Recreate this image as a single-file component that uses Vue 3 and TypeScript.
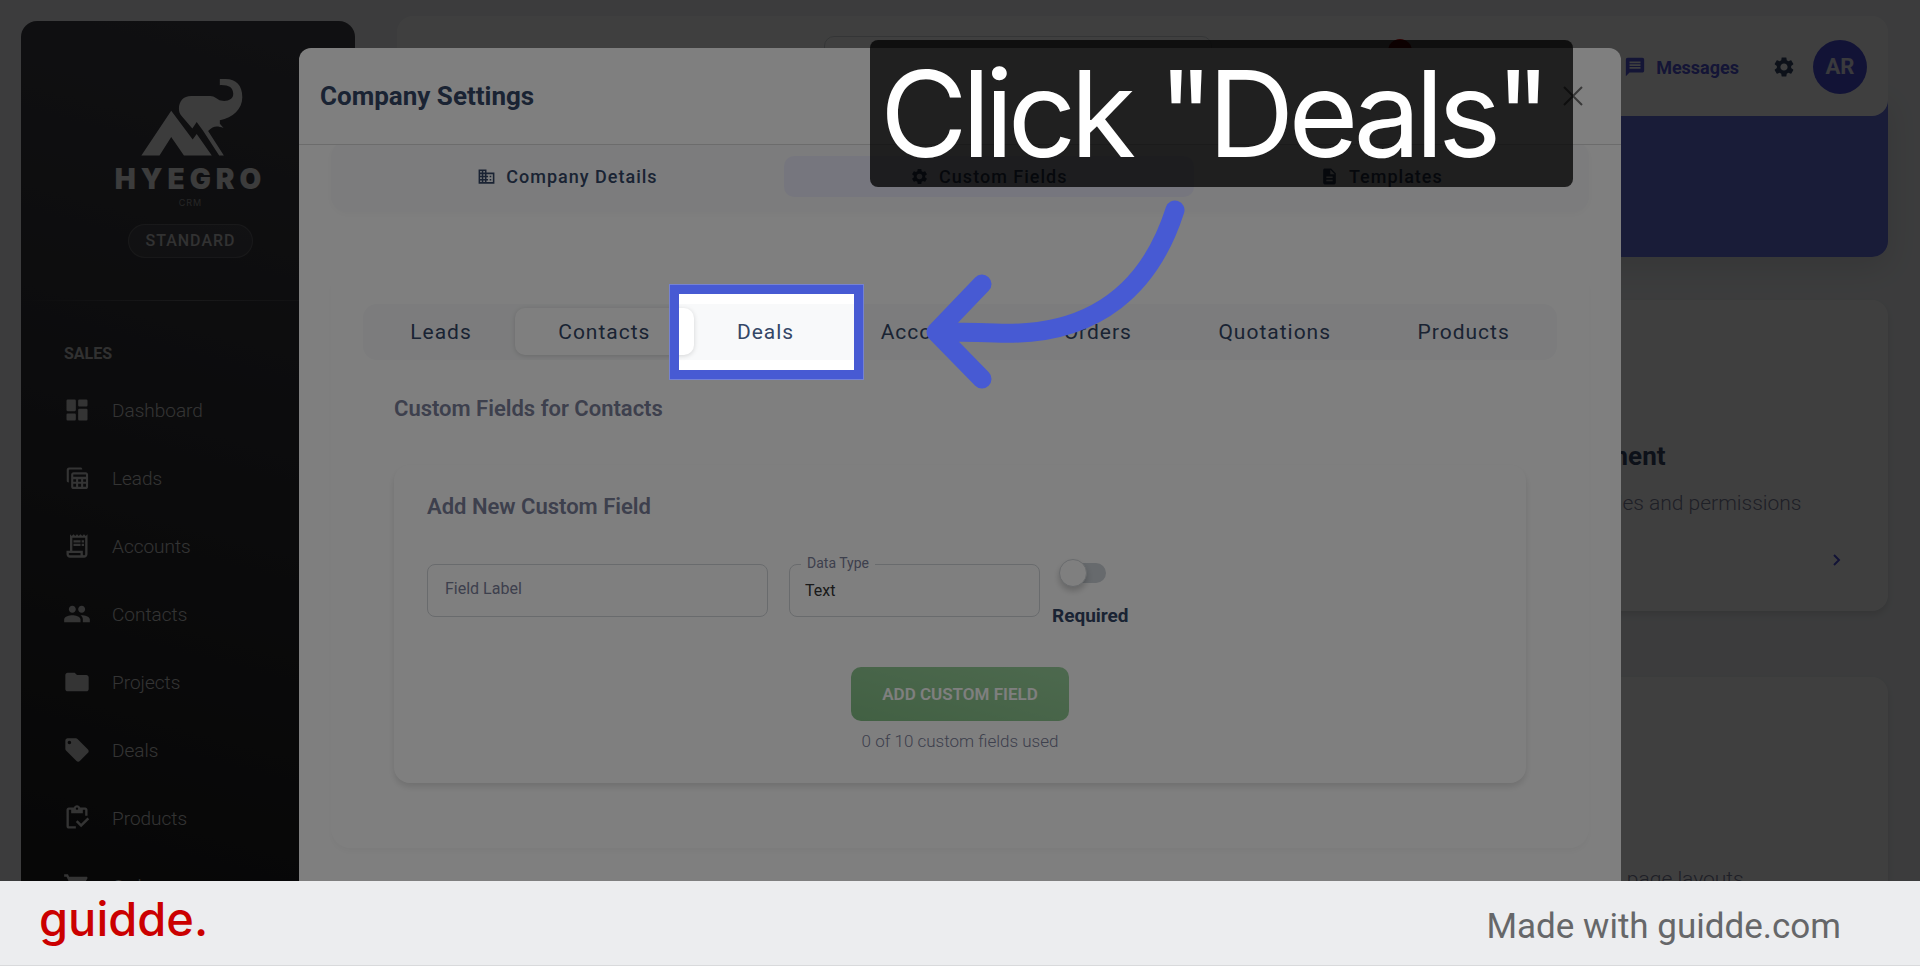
<script setup lang="ts">
import { ref } from 'vue'

interface NavItem {
  label: string
  icon: string
}

const icons: Record<string, string> = {
  dashboard:
    'M4 13h6a1 1 0 0 0 1-1V4a1 1 0 0 0-1-1H4a1 1 0 0 0-1 1v8a1 1 0 0 0 1 1zm0 8h6a1 1 0 0 0 1-1v-4a1 1 0 0 0-1-1H4a1 1 0 0 0-1 1v4a1 1 0 0 0 1 1zm10 0h6a1 1 0 0 0 1-1v-8a1 1 0 0 0-1-1h-6a1 1 0 0 0-1 1v8a1 1 0 0 0 1 1zM13 4v4a1 1 0 0 0 1 1h6a1 1 0 0 0 1-1V4a1 1 0 0 0-1-1h-6a1 1 0 0 0-1 1z',
  leads:
    'M5 15.500V5.500C5 5 5.300 4.700 5.800 4.700H16.500V4.500C16.500 3.500 15.800 3 15 3H5.200C4 3 3.200 3.800 3.200 5v9.300c0 .8.700 1.500 1.800 1.500zM19.500 7H9C7.900 7 7 7.900 7 9v10.500C7 20.600 7.900 21.500 9 21.500h10.500c1.100 0 2-.9 2-2V9c0-1.100-.9-2-2-2zm.2 2v2H8.800V9zM8.800 13h2.400v2.200H8.800zm0 4h2.400v2.500H8.800zm4.200 2.500V17h2.500v2.500zm0-4.300V13h2.500v2.200zm4.300 4.300V17h2.400v2.500zm0-4.300V13h2.400v2.200z',
  accounts:
    'M19.500 3.500L18 2l-1.500 1.500L15 2l-1.500 1.500L12 2l-1.500 1.500L9 2 7.500 3.500 6 2v14H3v3c0 1.660 1.340 3 3 3h12c1.660 0 3-1.340 3-3V2l-1.500 1.500zM15 20H6c-.55 0-1-.45-1-1v-1h10v2zm4-1c0 .55-.45 1-1 1s-1-.45-1-1v-3H8V5h11v14zM9 7h6v2H9zM16 7h2v2h-2zM9 10h6v2H9zM16 10h2v2h-2z',
  contacts:
    'M16 11c1.660 0 2.990-1.340 2.990-3S17.660 5 16 5c-1.660 0-3 1.340-3 3s1.340 3 3 3zm-8 0c1.660 0 2.990-1.340 2.990-3S9.660 5 8 5C6.340 5 5 6.340 5 8s1.340 3 3 3zm0 2c-2.330 0-7 1.170-7 3.500V19h14v-2.500c0-2.330-4.670-3.500-7-3.500zm8 0c-.29 0-.62.02-.97.05 1.160.84 1.970 1.970 1.970 3.450V19h6v-2.500c0-2.330-4.670-3.500-7-3.500z',
  projects:
    'M10 4H4c-1.100 0-1.990.9-1.990 2L2 18c0 1.100.9 2 2 2h16c1.100 0 2-.9 2-2V8c0-1.100-.9-2-2-2h-8l-2-2z',
  deals:
    'M21.410 11.580l-9-9C12.050 2.220 11.550 2 11 2H4c-1.100 0-2 .9-2 2v7c0 .55.22 1.050.59 1.420l9 9c.36.36.86.58 1.410.58.55 0 1.050-.22 1.410-.59l7-7c.37-.36.59-.86.59-1.410 0-.55-.23-1.060-.59-1.420zM5.500 7C4.670 7 4 6.330 4 5.500S4.670 4 5.500 4 7 4.670 7 5.500 6.330 7 5.500 7z',
  products:
    'M5 5h2v3h10V5h2v5h2V5c0-1.100-.9-2-2-2h-4.180C14.400 1.840 13.300 1 12 1s-2.400.84-2.820 2H5c-1.100 0-2 .9-2 2v14c0 1.100.9 2 2 2h6v-2H5V5zm7-2c.55 0 1 .45 1 1s-.45 1-1 1-1-.45-1-1 .45-1 1-1zM21 11.500L15.510 17l-3.010-3L11 15.500l4.510 4.500L22.500 13z',
  orders:
    'M7 18c-1.100 0-1.990.9-1.990 2S5.900 22 7 22s2-.9 2-2-.9-2-2-2zM1 2v2h2l3.600 7.590-1.350 2.450c-.16.28-.25.61-.25.96 0 1.100.9 2 2 2h12v-2H7.420c-.14 0-.25-.11-.25-.25l.03-.12.9-1.630h7.450c.75 0 1.410-.41 1.750-1.030l3.580-6.490c.08-.14.12-.31.12-.48 0-.55-.45-1-1-1H5.210l-.94-2H1zm16 16c-1.100 0-1.990.9-1.990 2s.89 2 1.990 2 2-.9 2-2-.9-2-2-2z',
  building:
    'M12 7V3H2v18h20V7H12zM6 19H4v-2h2v2zm0-4H4v-2h2v2zm0-4H4V9h2v2zm0-4H4V5h2v2zm4 12H8v-2h2v2zm0-4H8v-2h2v2zm0-4H8V9h2v2zm0-4H8V5h2v2zm10 12h-8v-2h2v-2h-2v-2h2v-2h-2V9h8v10zm-2-8h-2v2h2v-2zm0 4h-2v2h2v-2z',
  gear:
    'M19.140 12.940c.04-.3.06-.61.06-.94 0-.32-.02-.64-.07-.94l2.030-1.580c.18-.14.23-.41.12-.61l-1.920-3.320c-.12-.22-.37-.29-.59-.22l-2.390.96c-.5-.38-1.030-.7-1.620-.94l-.36-2.540c-.04-.24-.24-.41-.48-.41h-3.840c-.24 0-.43.17-.47.41l-.36 2.540c-.59.24-1.130.57-1.620.94l-2.390-.96c-.22-.08-.47 0-.59.22L2.740 8.870c-.12.21-.08.47.12.61l2.030 1.580c-.05.3-.09.63-.09.94s.02.64.07.94l-2.030 1.580c-.18.14-.23.41-.12.61l1.920 3.320c.12.22.37.29.59.22l2.390-.96c.5.38 1.030.7 1.620.94l.36 2.540c.05.24.24.41.48.41h3.840c.24 0 .44-.17.47-.41l.36-2.540c.59-.24 1.130-.56 1.620-.94l2.390.96c.22.08.47 0 .59-.22l1.920-3.320c.12-.22.07-.47-.12-.61l-2.010-1.580zM12 15.600c-1.980 0-3.600-1.620-3.600-3.600s1.620-3.600 3.600-3.600 3.600 1.620 3.600 3.600-1.620 3.600-3.600 3.600z',
  document:
    'M14 2H6c-1.100 0-1.990.9-1.990 2L4 20c0 1.100.89 2 1.990 2H18c1.100 0 2-.9 2-2V8l-6-6zm2 16H8v-2h8v2zm0-4H8v-2h8v2zm-3-5V3.500L18.500 9H13z',
  message:
    'M20 2H4c-1.100 0-1.990.9-1.990 2L2 22l4-4h14c1.100 0 2-.9 2-2V4c0-1.100-.9-2-2-2zm-2 12H6v-2h12v2zm0-3H6V9h12v2zm0-3H6V6h12v2z',
}

const navItems: NavItem[] = [
  { label: 'Dashboard', icon: 'dashboard' },
  { label: 'Leads', icon: 'leads' },
  { label: 'Accounts', icon: 'accounts' },
  { label: 'Contacts', icon: 'contacts' },
  { label: 'Projects', icon: 'projects' },
  { label: 'Deals', icon: 'deals' },
  { label: 'Products', icon: 'products' },
  { label: 'Orders', icon: 'orders' },
]

const sections: NavItem[] = [
  { label: 'Company Details', icon: 'building' },
  { label: 'Custom Fields', icon: 'gear' },
  { label: 'Templates', icon: 'document' },
]
const activeSection = ref('Custom Fields')

const entities = ['Leads', 'Contacts', 'Deals', 'Accounts', 'Orders', 'Quotations', 'Products']
const activeEntity = ref('Contacts')

const fieldLabel = ref('')
const dataType = ref('Text')
const required = ref(false)
</script>

<template>
  <div class="guide">
    <div class="stage">
      <div class="app">
        <aside class="sidebar">
          <div class="brand">
            <svg class="brand-mark" viewBox="401 232 340 238" aria-hidden="true">
              <path d="M512 332 576 418 588 402 633 466H550L512 411 477 466H423Z" />
              <path
                d="M535 326C535 304 548 288 572 288H628C642 288 650 299 660 302C680 306 698 298 697 281C696 263 684 255 657 256V238H674C706 238 724 258 724 292C724 328 696 352 657 361V371L668 384C650 378 638 376 622 393L669 466H655L607 392 588 366 575 385 543 348C537 341 535 335 535 326Z"
              />
            </svg>
            <span class="brand-name">HYEGRO</span>
            <span class="brand-sub">CRM</span>
            <span class="plan">STANDARD</span>
          </div>
          <hr class="rule" />
          <h2 class="nav-title">SALES</h2>
          <nav class="nav">
            <a v-for="item in navItems" :key="item.label" href="#" class="nav-link">
              <svg viewBox="0 0 24 24" aria-hidden="true"><path :d="icons[item.icon]" fill-rule="evenodd" /></svg>
              <span>{{ item.label }}</span>
            </a>
          </nav>
        </aside>

        <main class="main">
          <header class="topbar">
            <input class="search" type="search" aria-label="Search" />
            <div class="topbar-actions">
              <button class="alerts" type="button" aria-label="Notifications"><i class="dot"></i></button>
              <a href="#" class="messages">
                <svg viewBox="0 0 24 24" aria-hidden="true"><path :d="icons.message" /></svg>
                <span>Messages</span>
              </a>
              <button class="settings" type="button" aria-label="Settings">
                <svg viewBox="0 0 24 24" aria-hidden="true"><path :d="icons.gear" /></svg>
              </button>
              <span class="avatar">AR</span>
            </div>
          </header>
          <div class="banner"></div>
          <section class="tile">
            <h3>User Management</h3>
            <p>Manage user profiles and permissions</p>
            <svg class="chevron" viewBox="0 0 10 14" aria-hidden="true"><path d="M2 2 7 7 2 12" /></svg>
          </section>
          <section class="tile tile-second">
            <p>Customize fields &amp; page layouts</p>
          </section>
        </main>
      </div>

      <div class="backdrop">
        <div class="modal" role="dialog" aria-labelledby="modal-title">
          <header class="modal-head">
            <h1 id="modal-title">Company Settings</h1>
            <button class="close" type="button" aria-label="Close">
              <svg viewBox="0 0 20 20" aria-hidden="true"><path d="M1 1 19 19M19 1 1 19" /></svg>
            </button>
          </header>
          <div class="modal-body">
            <div class="sections" role="tablist">
              <button
                v-for="s in sections"
                :key="s.label"
                type="button"
                role="tab"
                class="section-tab"
                :class="{ active: s.label === activeSection }"
                @click="activeSection = s.label"
              >
                <svg viewBox="0 0 24 24" aria-hidden="true"><path :d="icons[s.icon]" /></svg>
                <span>{{ s.label }}</span>
              </button>
            </div>

            <section class="panel">
              <div class="entities" role="tablist">
                <button
                  v-for="e in entities"
                  :key="e"
                  type="button"
                  role="tab"
                  class="entity-tab"
                  :class="{ active: e === activeEntity }"
                  @click="activeEntity = e"
                >
                  {{ e }}
                </button>
              </div>
              <div class="fields">
                <h2>Custom Fields for {{ activeEntity }}</h2>
                <form class="card" @submit.prevent>
                  <h3>Add New Custom Field</h3>
                  <div class="row">
                    <input v-model="fieldLabel" class="box text-box" placeholder="Field Label" aria-label="Field Label" />
                    <div class="select-wrap">
                      <label for="data-type">Data Type</label>
                      <select id="data-type" v-model="dataType" class="box select-box">
                        <option>Text</option>
                        <option>Number</option>
                        <option>Date</option>
                      </select>
                    </div>
                    <label class="toggle">
                      <input v-model="required" type="checkbox" />
                      <span>Required</span>
                    </label>
                  </div>
                  <button class="add" type="submit" disabled>ADD CUSTOM FIELD</button>
                  <p class="usage">0 of 10 custom fields used</p>
                </form>
              </div>
            </section>
          </div>
        </div>
      </div>

      <div class="spotlight"></div>
      <div class="callout">Click "Deals"</div>
      <svg class="arrow" viewBox="0 0 270 200" aria-hidden="true">
        <path d="M255 20C232 92 180 148 75 143Q40 142 16 142M62 94 16 142 62 189" />
      </svg>
    </div>

    <footer class="credit">
      <span class="logo">guidde.</span>
      <span class="made">Made with guidde.com</span>
    </footer>
  </div>
</template>

<style>
body {
  margin: 0;
}
</style>

<style scoped>
* {
  box-sizing: border-box;
}
h1,
h2,
h3,
p {
  margin: 0;
}
button,
input,
select {
  font: inherit;
  color: inherit;
  border: 0;
  background: none;
  padding: 0;
  margin: 0;
}
a {
  color: inherit;
  text-decoration: none;
}
svg {
  display: block;
  flex: none;
  fill: currentColor;
}
.guide {
  height: 100vh;
  display: flex;
  flex-direction: column;
  font-family: Roboto, 'Liberation Sans', sans-serif;
}
.stage {
  position: relative;
  flex: 1;
  min-height: 0;
  overflow: hidden;
}
.app {
  isolation: isolate;
  height: 100%;
  display: flex;
  gap: 42px;
  padding: 16px 32px 0 21px;
  background: #f0f2f5;
}

/* Sidebar */
.sidebar {
  flex: none;
  width: 334px;
  height: 940px;
  margin-top: 5px;
  border-radius: 16px;
  background: linear-gradient(195deg, #42424a, #191919);
  color: #fff;
}
.brand {
  display: flex;
  flex-direction: column;
  align-items: center;
  padding: 56px 0 0 5px;
}
.brand-mark {
  width: 114px;
  height: 80px;
}
.brand-name {
  margin-top: 6px;
  font: 900 28px/32px Inter, sans-serif;
  letter-spacing: 5px;
}
.brand-mark,
.brand-name {
  color: #f2f2f2;
}
.brand-sub {
  margin-top: 2px;
  font: 400 9px/12px Inter, sans-serif;
  letter-spacing: 1px;
  color: #999;
}
.plan {
  height: 34px;
  margin-top: 15px;
  padding: 0 16px;
  border: 1px solid rgba(255, 255, 255, 0.16);
  border-radius: 17px;
  background: rgba(255, 255, 255, 0.08);
  font-size: 16px;
  font-weight: 500;
  line-height: 32px;
  letter-spacing: 1px;
  color: #c8c8c8;
}
.rule {
  height: 1px;
  margin: 42px 0 0;
  border: 0;
  background: linear-gradient(90deg, transparent, rgba(255, 255, 255, 0.25), transparent);
}
.nav-title {
  margin: 41px 0 0 43px;
  font-size: 16px;
  line-height: 24px;
  font-weight: 700;
  color: #c4c4c4;
}
.nav {
  margin-top: 10px;
}
.nav-link {
  display: flex;
  align-items: center;
  gap: 21px;
  height: 68px;
  padding-left: 42px;
  font-size: 19px;
  font-weight: 300;
  color: #d0d0d0;
}
.nav-link svg {
  width: 28px;
  height: 28px;
}

/* Page behind the dialog */
.main {
  flex: 1;
  min-width: 0;
}
.topbar {
  position: relative;
  z-index: 1;
  display: flex;
  justify-content: space-between;
  height: 100px;
  padding: 20px 21px 0 427px;
  border-radius: 16px;
  background: #fff;
}
.search {
  width: 388px;
  height: 50px;
  border: 1px solid #d2d6da;
  border-radius: 10px;
}
.topbar-actions {
  display: flex;
  align-items: center;
  height: 62px;
  color: #5054d8;
}
.alerts {
  position: relative;
  width: 190px;
  height: 44px;
  margin-right: 46px;
}
.dot {
  position: absolute;
  top: -6px;
  left: 0;
  width: 24px;
  height: 24px;
  border-radius: 50%;
  background: #c40000;
}
.messages {
  display: flex;
  align-items: center;
  gap: 10px;
  font-size: 18px;
  font-weight: 700;
}
.messages svg {
  width: 22px;
  height: 22px;
}
.settings {
  margin: 0 17px 0 33px;
  color: #344767;
}
.settings svg {
  width: 24px;
  height: 24px;
}
.avatar {
  width: 54px;
  height: 54px;
  border-radius: 50%;
  background: #4a4ed8;
  color: #e8e8f4;
  font-size: 22px;
  font-weight: 700;
  line-height: 54px;
  text-align: center;
}
.banner {
  height: 161px;
  margin-top: -20px;
  border-radius: 0 0 16px 16px;
  background: #6570e0;
  box-shadow: 0 10px 30px rgba(0, 0, 0, 0.1);
}
.tile {
  position: relative;
  height: 311px;
  margin-top: 43px;
  padding: 139px 0 0 1054px;
  border-radius: 16px;
  background: #fff;
  box-shadow: 0 4px 6px rgba(0, 0, 0, 0.1);
}
.tile h3 {
  font-size: 26px;
  line-height: 34px;
  color: #344767;
}
.tile p {
  margin-top: 15px;
  font-size: 21px;
  line-height: 30px;
  font-weight: 300;
  color: #7b809a;
  white-space: nowrap;
}
.tile-second {
  margin-top: 66px;
  padding-top: 172px;
}
.chevron {
  position: absolute;
  right: 46px;
  bottom: 44px;
  width: 10px;
  height: 14px;
  fill: none;
  stroke: #4a4ed8;
  stroke-width: 2;
}

/* Dialog */
.backdrop {
  position: absolute;
  inset: 0;
  display: flex;
  justify-content: center;
  padding: 48px 48px 0;
  background: rgba(0, 0, 0, 0.5);
}
.modal {
  display: flex;
  flex-direction: column;
  width: 100%;
  max-width: 1322px;
  border-radius: 12px 12px 0 0;
  background: #fff;
  color: #344767;
}
.modal-head {
  display: flex;
  align-items: center;
  justify-content: space-between;
  height: 97px;
  padding: 0 38px 0 21px;
  border-bottom: 1px solid #d8d8d8;
}
.modal-head h1 {
  font-size: 26px;
  font-weight: 700;
}
.close svg {
  width: 20px;
  height: 20px;
  fill: none;
  stroke: #707070;
  stroke-width: 2;
}
.modal-body {
  flex: 1;
  min-height: 0;
  overflow: hidden;
  padding: 0 32px;
}
.sections {
  display: flex;
  margin-top: -4px;
  height: 71px;
  padding: 15px 20px;
  border-radius: 16px;
  background: #f8f9fa;
  box-shadow: 0 2px 8px rgba(0, 0, 0, 0.03);
}
.section-tab {
  flex: 1 1 auto;
  display: flex;
  align-items: center;
  justify-content: center;
  gap: 10px;
  border-radius: 10px;
  font-size: 18px;
  font-weight: 500;
  letter-spacing: 1px;
}
.section-tab svg {
  width: 19px;
  height: 19px;
}
.section-tab.active {
  background: #ededfc;
}
.panel {
  margin-top: 58px;
  height: 578px;
  padding: 34px 32px 0;
  border-radius: 20px;
  box-shadow: 0 4px 6px rgba(0, 0, 0, 0.03);
}
.entities {
  display: flex;
  height: 56px;
  padding: 4px 4px 5px;
  border-radius: 14px;
  background: #f8f9fa;
}
.entity-tab {
  flex: 1 1 auto;
  border-radius: 10px;
  font-size: 21px;
  font-weight: 400;
  letter-spacing: 1px;
}
.entity-tab.active {
  background: #fff;
  box-shadow: 0 1px 5px rgba(0, 0, 0, 0.15);
}
.fields {
  padding: 34px 31px 0;
}
.fields h2,
.fields h3 {
  font-size: 22px;
  line-height: 30px;
  font-weight: 600;
  color: #7b809a;
}
.card {
  height: 318px;
  margin-top: 41px;
  padding: 27px 33px;
  border-radius: 16px;
  box-shadow: 0 4px 6px rgba(0, 0, 0, 0.12);
}
.row {
  display: flex;
  margin-top: 42px;
}
.box {
  height: 53px;
  border: 1px solid #d2d6da;
  border-radius: 8px;
  font-size: 16px;
}
.text-box {
  width: 341px;
  padding: 0 17px 5px;
}
.text-box::placeholder {
  color: #7b809a;
  opacity: 1;
}
.select-wrap {
  position: relative;
  width: 251px;
  margin-left: 21px;
}
.select-wrap label {
  position: absolute;
  top: -10px;
  left: 12px;
  padding: 0 6px;
  background: #fff;
  font-size: 14px;
  line-height: 18px;
  color: #7b809a;
}
.select-box {
  width: 100%;
  padding: 0 15px;
  appearance: none;
  color: #343434;
}
.toggle {
  display: flex;
  flex-direction: column;
  align-items: flex-start;
  margin-left: 12px;
  font-size: 19px;
  line-height: 26px;
  font-weight: 700;
}
.toggle input {
  position: relative;
  appearance: none;
  width: 44px;
  height: 20px;
  margin: -1px 0 20px 10px;
  border-radius: 10px;
  background: #ced4da;
}
.toggle input::before {
  content: '';
  position: absolute;
  top: -4px;
  left: -3px;
  width: 26px;
  height: 26px;
  border: 1px solid #d2d6da;
  border-radius: 50%;
  background: #fff;
  box-shadow: 0 4px 6px rgba(0, 0, 0, 0.2);
}
.add {
  display: block;
  height: 54px;
  margin: 38px auto 0;
  padding: 0 31px;
  border-radius: 10px;
  background: linear-gradient(195deg, #66bb6a, #43a047);
  opacity: 0.65;
  color: #fff;
  font-size: 17px;
  font-weight: 600;
}
.usage {
  margin-top: 8px;
  font-size: 17px;
  line-height: 24px;
  font-weight: 300;
  text-align: center;
  color: #7b809a;
}

/* Walkthrough annotations */
.spotlight {
  position: absolute;
  left: 670px;
  top: 285px;
  width: 193px;
  height: 94px;
  border: 9px solid #475ad3;
  outline: 1px solid #7582d2;
  box-shadow: 0 0 0 2000px rgba(0, 0, 0, 0.5);
}
.callout {
  position: absolute;
  left: 870px;
  top: 40px;
  width: 703px;
  height: 147px;
  padding-left: 10px;
  border-radius: 8px;
  background: rgba(0, 0, 0, 0.75);
  color: #fff;
  font: 400 120px/147px Inter, sans-serif;
  letter-spacing: -6px;
  white-space: nowrap;
}
.arrow {
  position: absolute;
  left: 920px;
  top: 190px;
  width: 270px;
  height: 200px;
  fill: none;
  stroke: #475ad3;
  stroke-width: 19;
  stroke-linecap: round;
  stroke-linejoin: round;
}

.credit {
  flex: none;
  display: flex;
  align-items: center;
  justify-content: space-between;
  height: 85px;
  padding: 0 79px 0 39px;
  border-bottom: 1px solid #d9dadc;
  background: #ecedef;
}
.logo {
  padding-bottom: 9px;
  font: 500 47px/56px Inter, sans-serif;
  color: #cb0000;
}
.made {
  padding-top: 8px;
  font-size: 35px;
  line-height: 44px;
  color: #666769;
}
</style>
